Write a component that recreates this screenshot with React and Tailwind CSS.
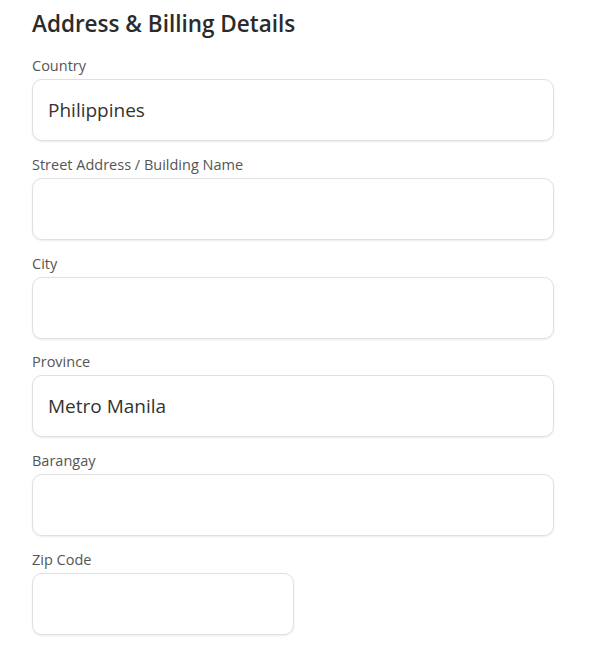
import React from "react";

const fields = [
  { label: "Country", value: "Philippines" },
  { label: "Street Address / Building Name", value: "" },
  { label: "City", value: "" },
  { label: "Province", value: "Metro Manila" },
  { label: "Barangay", value: "" },
  { label: "Zip Code", value: "", short: true },
];

function Field({ label, value, short }) {
  return (
    <div className="flex flex-col">
      <label className="text-[14.5px] leading-[20px] text-[#555555]">{label}</label>
      <input
        type="text"
        defaultValue={value}
        className={`mt-[3px] h-[62px] rounded-[10px] border border-[#e0e0e0] bg-white px-[15px] text-[19px] text-[#333333] shadow-[0_1px_2px_rgba(0,0,0,0.08)] outline-none ${
          short ? "w-[262px]" : "w-[522px]"
        }`}
      />
    </div>
  );
}

export default function App() {
  return (
    <div
      className="min-h-screen bg-white px-8 pt-[9px]"
      style={{ fontFamily: '"Open Sans", "Noto Sans", sans-serif' }}
    >
      <h1 className="text-[22.5px] leading-[30px] font-semibold text-[#2b2b2b]">
        Address &amp; Billing Details
      </h1>
      <div className="mt-[17px] flex flex-col gap-[13.8px]">
        {fields.map((f) => (
          <Field key={f.label} {...f} />
        ))}
      </div>
    </div>
  );
}
